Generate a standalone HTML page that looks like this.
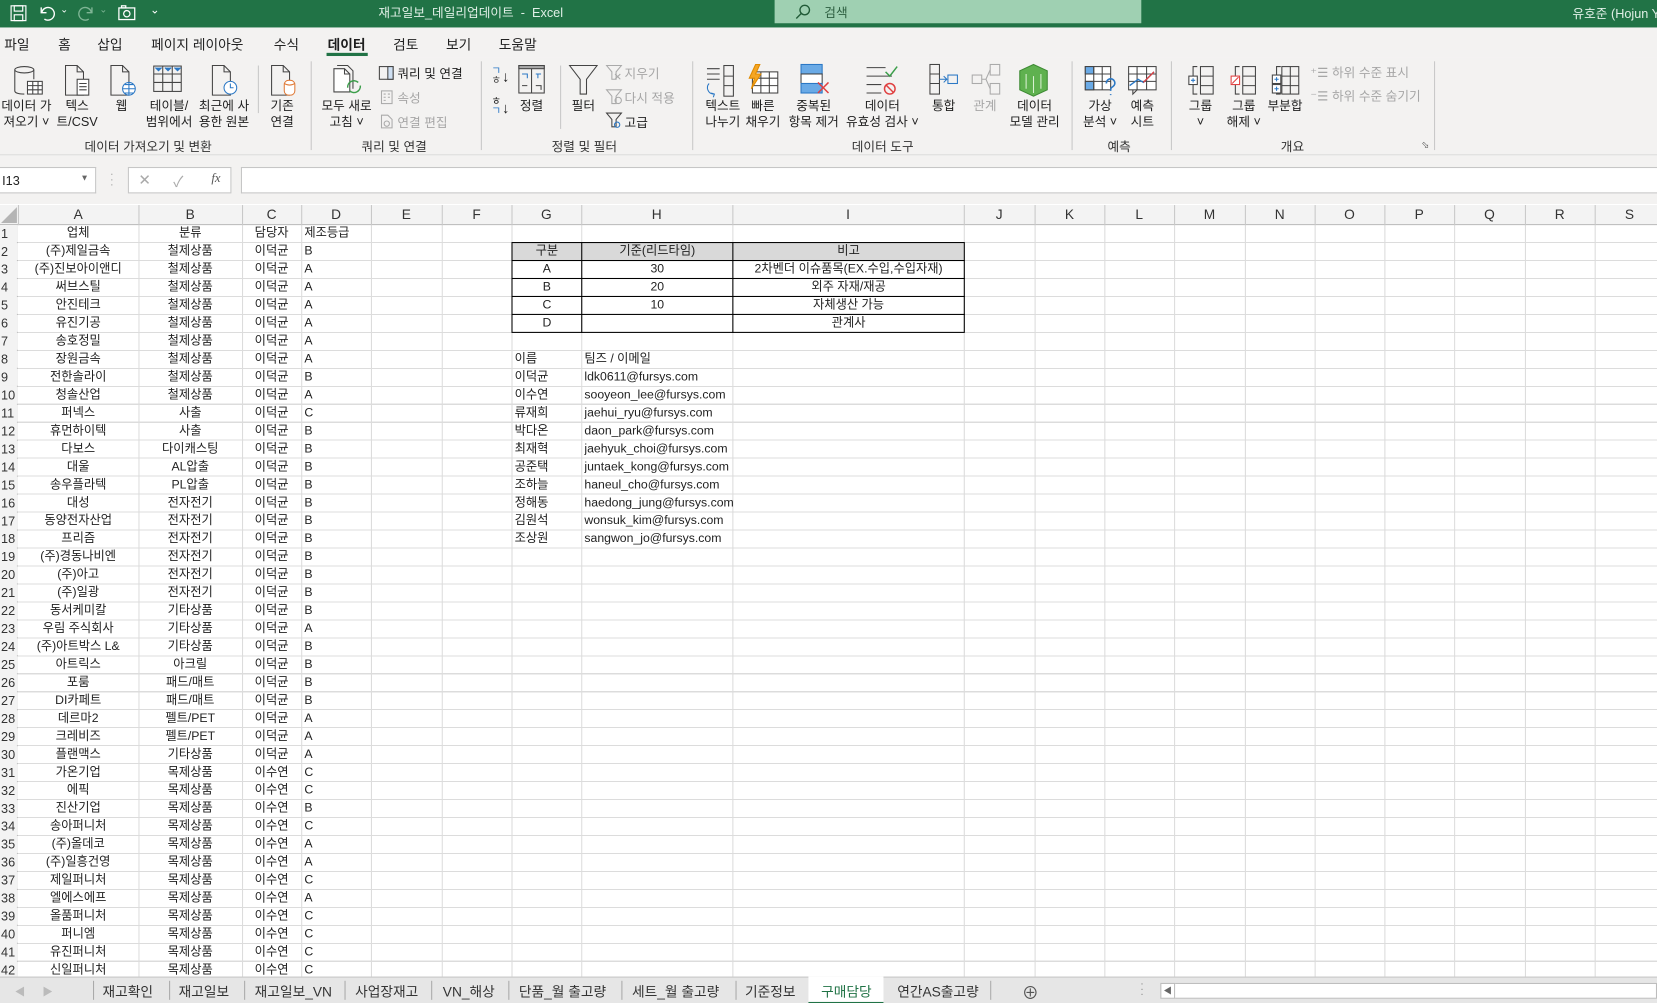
<!DOCTYPE html>
<html><head><meta charset="utf-8">
<style>
*{box-sizing:border-box;margin:0;padding:0}
html,body{width:1657px;height:1003px;overflow:hidden;background:#fff}
#w{position:absolute;left:0;top:0;width:1568px;height:949px;transform:scale(1.05676,1.05690);transform-origin:0 0;font-family:"Liberation Sans","Noto Sans CJK KR",sans-serif;color:#222;overflow:hidden}
.abs{position:absolute}
#title{left:0;top:0;width:1568px;height:26px;background:#217346;color:#fff;white-space:nowrap}
#menu{left:0;top:26px;width:1568px;height:28px;background:#f3f2f1;font-size:13px}
#menu span{position:absolute;top:6px}
#rib{left:0;top:54px;width:1568px;height:93px;background:#f3f2f1;font-size:12px;border-bottom:1px solid #dadada}
#rib .l{position:absolute;text-align:center;line-height:15px;white-space:nowrap}
#rib .s{position:absolute;white-space:nowrap}
#rib .g{position:absolute;top:76px;font-size:12px;color:#333;white-space:nowrap}
#rib .sep{position:absolute;top:4px;width:1px;height:84px;background:#c8c8c8}
#rib svg{position:absolute}
.dis{color:#a6a6a6}
#fb{left:0;top:147px;width:1568px;height:46px;background:#f3f2f1}
#grid{left:0;top:194px;width:1568px;height:730px;background:#fff;font-size:11.6px;overflow:hidden}
#hdr{left:0;top:0;width:1568px;height:19px;background:#f3f3f3;border-bottom:1px solid #bdbdbd;font-size:13px;color:#333}
#hdr span{position:absolute;top:1px;text-align:center}
#rh{left:0;top:19px;width:17px;height:720px;background:#f3f3f3;border-right:1px solid #bdbdbd}
#hl{left:17px;top:19px;width:1560px;height:720px;background:repeating-linear-gradient(to bottom,transparent 0,transparent 16px,#dcdcdc 16px,#dcdcdc 17px)}
.v{position:absolute;top:0;width:1px;height:730px;background:#dcdcdc}
.vh{position:absolute;top:0;width:1px;height:19px;background:#c8c8c8}
.r{position:absolute;left:0;height:17px;width:1568px;line-height:16px;white-space:nowrap}
.r span{position:absolute;top:0;overflow:hidden}
.n{left:1px;width:16px;font-size:12px;color:#333;background:#f3f3f3}
.a{left:17px;width:114px;text-align:center}
.b{left:131px;width:98px;text-align:center}
.c{left:229px;width:56px;text-align:center}
.d{left:288px;width:63px}
.g1{left:487px;width:63px}
.h1{left:553px;width:145px}
.tg{left:484px;width:67px;text-align:center}
.th{left:550px;width:144px;text-align:center}
.ti{left:693px;width:220px;text-align:center}
#tbl{left:484px;top:16px;width:429px;height:86px;border:1px solid #000}
#tabs{left:0;top:924px;width:1568px;height:25px;background:#e6e6e6;border-top:1px solid #c6c6c6;font-size:13px;color:#333}
#tabs span{position:absolute;top:3px}
#tabs i{position:absolute;top:3px;width:1px;height:18px;background:#aaa}
</style></head><body><div id="w">

<div id="title" class="abs">
<svg class="abs" style="left:9px;top:4px" width="17" height="17" viewBox="0 0 17 17" fill="none" stroke="#fff" stroke-width="1.1"><rect x="1.5" y="1.5" width="14" height="14"/><rect x="4.5" y="1.5" width="8" height="5"/><rect x="4.5" y="10" width="8" height="5.5"/></svg>
<svg class="abs" style="left:36px;top:4px" width="18" height="17" viewBox="0 0 18 17" fill="none" stroke="#fff" stroke-width="1.3"><path d="M3 3v5h5"/><path d="M3.5 8A6 6 0 1 1 6 14"/></svg>
<span class="abs" style="left:57px;top:4px;font-size:9px">⌄</span>
<svg class="abs" style="left:72px;top:4px" width="18" height="17" viewBox="0 0 18 17" fill="none" stroke="#7fb595" stroke-width="1.3"><path d="M15 3v5h-5"/><path d="M14.5 8A6 6 0 1 0 12 14"/></svg>
<span class="abs" style="left:94px;top:4px;font-size:9px;color:#7fb595">⌄</span>
<svg class="abs" style="left:111px;top:4px" width="18" height="17" viewBox="0 0 18 17" fill="none" stroke="#fff" stroke-width="1.2"><rect x="1.5" y="3.5" width="15" height="11"/><rect x="4" y="1.5" width="4" height="2"/><circle cx="9" cy="9" r="3"/></svg>
<span class="abs" style="left:142px;top:3px;font-size:11px">⌄</span>
<span class="abs" style="left:358px;top:3px;font-size:12px;color:#e0efe6">재고일보_데일리업데이트 &nbsp;- &nbsp;Excel</span>
<div class="abs" style="left:733px;top:0;width:347px;height:22px;background:#9fd0b2"></div>
<svg class="abs" style="left:752px;top:3px" width="16" height="16" viewBox="0 0 16 16" fill="none" stroke="#215b37" stroke-width="1.3"><circle cx="9.5" cy="6.5" r="4.5"/><path d="M6.3 9.7L1.5 14.5"/></svg>
<span class="abs" style="left:780px;top:3px;font-size:12px;color:#2d5e40">검색</span>
<span class="abs" style="left:1488px;top:4px;font-size:12px;color:#e0efe6">유호준 (Hojun Y</span>
</div>

<div id="menu" class="abs">
<span style="left:4px">파일</span><span style="left:55px">홈</span><span style="left:92px">삽입</span><span style="left:143px">페이지 레이아웃</span><span style="left:259px">수식</span><span style="left:310px;font-weight:bold;color:#1e1e1e">데이터</span><span style="left:372px">검토</span><span style="left:422px">보기</span><span style="left:472px">도움말</span>
<div class="abs" style="left:309px;top:24px;width:39px;height:3px;background:#217346"></div>
</div>

<div id="rib" class="abs">
<svg style="left:11px;top:7px" width="32" height="32" viewBox="0 0 32 32" fill="none" stroke="#444" stroke-width="1"><ellipse cx="12" cy="5" rx="9" ry="3"/><path d="M3 5v20c0 2 4 3 9 3"/><path d="M21 5v9"/><rect x="15" y="16" width="14" height="12" fill="#fff"/><path d="M15 20h14M15 24h14M20 16v12M25 16v12"/></svg>
<div class="l" style="left:0;top:39px;width:50px">데이터 가<br>져오기 ˅</div>
<svg style="left:59px;top:7px" width="30" height="32" viewBox="0 0 30 32" fill="none" stroke="#444"><path d="M3 1h11l6 6v22H3z"/><path d="M14 1v6h6"/><rect x="14" y="14" width="11" height="15" fill="#fff"/><path d="M16 18h7M16 21h7M16 24h7"/></svg>
<div class="l" style="left:48px;top:39px;width:50px">텍스<br>트/CSV</div>
<svg style="left:102px;top:7px" width="30" height="32" viewBox="0 0 30 32" fill="none" stroke="#444"><path d="M3 1h11l6 6v22H3z"/><path d="M14 1v6h6"/><circle cx="20" cy="23" r="6" fill="#fff" stroke="#2b78c5"/><path d="M14 23h12M20 17v12M16 19h8M16 27h8" stroke="#2b78c5"/></svg>
<div class="l" style="left:100px;top:39px;width:30px">웹</div>
<svg style="left:144px;top:7px" width="30" height="30" viewBox="0 0 30 30" fill="none" stroke="#444"><rect x="1.5" y="1.5" width="26" height="24"/><path d="M1.5 9h26M1.5 17h26M10 1.5v24M19 1.5v24"/><path d="M3 3l3 3 3-3M12 3l3 3 3-3M21 3l3 3 3-3" fill="#2b78c5" stroke="#2b78c5"/></svg>
<div class="l" style="left:133px;top:39px;width:54px">테이블/<br>범위에서</div>
<svg style="left:198px;top:7px" width="30" height="32" viewBox="0 0 30 32" fill="none" stroke="#444"><path d="M3 1h11l6 6v22H3z"/><path d="M14 1v6h6"/><circle cx="20" cy="22" r="6" fill="#fff" stroke="#2b78c5"/><path d="M20 18v4h3" stroke="#2b78c5"/></svg>
<div class="l" style="left:185px;top:39px;width:54px">최근에 사<br>용한 원본</div>
<div class="sep" style="left:244px;top:8px;height:45px"></div>
<svg style="left:254px;top:7px" width="30" height="32" viewBox="0 0 30 32" fill="none" stroke="#444"><path d="M3 1h11l6 6v22H3z"/><path d="M14 1v6h6"/><rect x="15" y="15" width="10" height="14" rx="4" fill="#fff" stroke="#e07b39"/><path d="M15 18c3 2 7 2 10 0" stroke="#e07b39"/></svg>
<div class="l" style="left:250px;top:39px;width:34px">기존<br>연결</div>
<div class="g" style="left:80px">데이터 가져오기 및 변환</div>
<div class="sep" style="left:294px"></div>
<svg style="left:314px;top:7px" width="32" height="32" viewBox="0 0 32 32" fill="none" stroke="#444"><path d="M2 4h10l5 5v17H2z" fill="#fff"/><path d="M5 1h10l5 5v17" /><path d="M12 4v5h5"/><path d="M15 22a6 6 0 0 1 10-5M27 20a6 6 0 0 1-10 5" stroke="#3b9e4a" stroke-width="1.4"/></svg>
<div class="l" style="left:300px;top:39px;width:56px">모두 새로<br>고침 ˅</div>
<svg style="left:358px;top:8px" width="15" height="14" viewBox="0 0 15 14" fill="none" stroke="#444"><rect x="1" y="1" width="13" height="12"/><rect x="9" y="1" width="5" height="12" fill="#cfe0f3"/></svg>
<div class="s" style="left:376px;top:7px">쿼리 및 연결</div>
<svg style="left:360px;top:31px" width="12" height="14" viewBox="0 0 12 14" fill="none" stroke="#aaa"><rect x="1" y="1" width="10" height="12"/><path d="M3 4h2M3 7h2M3 10h2M7 4h2M7 7h2"/></svg>
<div class="s dis" style="left:376px;top:30px">속성</div>
<svg style="left:360px;top:54px" width="12" height="14" viewBox="0 0 12 14" fill="none" stroke="#aaa"><path d="M1 1h6l4 4v8H1z"/><circle cx="6" cy="9" r="2.5"/></svg>
<div class="s dis" style="left:376px;top:53px">연결 편집</div>
<div class="g" style="left:342px">쿼리 및 연결</div>
<div class="sep" style="left:455px"></div>
<div class="s" style="left:465px;top:9px;font-size:10px;line-height:9px;color:#2b78c5">ㄱ<br><span style="position:static;color:#444">ㅎ</span></div><div class="s" style="left:475px;top:10px;font-size:14px">↓</div>
<div class="s" style="left:465px;top:38px;font-size:10px;line-height:9px">ㅎ<br><span style="position:static;color:#2b78c5">ㄱ</span></div><div class="s" style="left:475px;top:40px;font-size:14px">↓</div>
<svg style="left:490px;top:7px" width="26" height="28" viewBox="0 0 26 28" fill="none" stroke="#444"><rect x="1" y="1" width="24" height="26"/><rect x="1" y="1" width="24" height="3" fill="#aaa"/><path d="M13 4v23"/><path d="M4 9h5v4M17 9h5M19 9v4" stroke="#2b78c5"/><path d="M4 20h5M17 20h5v4" /></svg>
<div class="l" style="left:486px;top:39px;width:34px">정렬</div>
<div class="sep" style="left:530px;top:8px;height:60px"></div>
<svg style="left:538px;top:7px" width="28" height="30" viewBox="0 0 28 30" fill="none" stroke="#444"><path d="M1 1h26l-10 13v14h-6V14z"/></svg>
<div class="l" style="left:535px;top:39px;width:34px">필터</div>
<svg style="left:573px;top:7px" width="16" height="16" viewBox="0 0 16 16" fill="none" stroke="#aaa"><path d="M1 1h14l-5 6v7H6V7z"/><path d="M9 9l5 5M14 9l-5 5"/></svg>
<div class="s dis" style="left:591px;top:7px">지우기</div>
<svg style="left:573px;top:30px" width="16" height="16" viewBox="0 0 16 16" fill="none" stroke="#aaa"><path d="M1 1h14l-5 6v7H6V7z"/><circle cx="12" cy="11" r="3"/></svg>
<div class="s dis" style="left:591px;top:30px">다시 적용</div>
<svg style="left:573px;top:52px" width="16" height="16" viewBox="0 0 16 16" fill="none" stroke="#444"><path d="M1 1h14l-5 6v7H6V7z"/><circle cx="11" cy="12" r="2.5" stroke="#2b78c5"/></svg>
<div class="s" style="left:591px;top:53px">고급</div>
<div class="g" style="left:522px">정렬 및 필터</div>
<div class="sep" style="left:655px"></div>
<svg style="left:667px;top:7px" width="30" height="32" viewBox="0 0 30 32" fill="none" stroke="#444"><path d="M2 4h12M2 9h12M2 14h12"/><rect x="18" y="1" width="9" height="29"/><path d="M18 11h9M18 20h9"/><path d="M8 28a6 6 0 0 1-4-10" stroke="#2b78c5"/><path d="M6 27l3 1-1 3" stroke="#2b78c5"/></svg>
<div class="l" style="left:662px;top:39px;width:44px">텍스트<br>나누기</div>
<svg style="left:706px;top:6px" width="32" height="32" viewBox="0 0 32 32" fill="none" stroke="#444"><rect x="6" y="8" width="24" height="20" fill="#fff"/><path d="M6 14h24M6 21h24M14 8v20M22 8v20"/><path d="M9 1L3 14h5l-3 10 9-14H9l4-9z" fill="#f5a623" stroke="#e08a00"/></svg>
<div class="l" style="left:700px;top:39px;width:44px">빠른<br>채우기</div>
<svg style="left:756px;top:6px" width="30" height="32" viewBox="0 0 30 32" fill="none" stroke="#444"><rect x="2" y="1" width="20" height="9" fill="#6aaae6" stroke="#2b78c5"/><rect x="2" y="10" width="20" height="9" fill="#fff"/><rect x="2" y="19" width="20" height="9" fill="#6aaae6" stroke="#2b78c5"/><path d="M18 18l10 10M28 18L18 28" stroke="#e04040" stroke-width="1.4"/></svg>
<div class="l" style="left:740px;top:39px;width:60px">중복된<br>항목 제거</div>
<svg style="left:818px;top:7px" width="32" height="30" viewBox="0 0 32 30" fill="none" stroke="#444"><path d="M2 3h18M2 11h24M2 19h14M2 27h14"/><path d="M20 7l4 4 7-9" stroke="#3b9e4a" stroke-width="1.4"/><circle cx="24" cy="23" r="5" stroke="#e04040" stroke-width="1.4"/><path d="M20.5 19.5l7 7" stroke="#e04040" stroke-width="1.4"/></svg>
<div class="l" style="left:799px;top:39px;width:72px">데이터<br>유효성 검사 ˅</div>
<svg style="left:878px;top:6px" width="30" height="32" viewBox="0 0 30 32" fill="none" stroke="#444"><rect x="2" y="1" width="9" height="28"/><path d="M2 10h9M2 19h9"/><path d="M11 15h7M15 12l3 3-3 3" stroke="#2b78c5"/><rect x="19" y="11" width="9" height="8" stroke="#2b78c5"/></svg>
<div class="l" style="left:876px;top:39px;width:34px">통합</div>
<svg style="left:918px;top:6px" width="30" height="32" viewBox="0 0 30 32" fill="none" stroke="#aaa"><rect x="2" y="11" width="9" height="8"/><rect x="19" y="1" width="9" height="10"/><rect x="19" y="19" width="9" height="10"/><path d="M11 15h4l4-9M15 15l4 9"/></svg>
<div class="l dis" style="left:915px;top:39px;width:34px">관계</div>
<svg style="left:963px;top:6px" width="30" height="32" viewBox="0 0 30 32" fill="#5fb14f" stroke="#3d8a33"><path d="M15 1l13 6v18l-13 6-13-6V7z"/><path d="M8 10v14M15 12v16M22 10v14" stroke="#d9f0d2" fill="none"/></svg>
<div class="l" style="left:950px;top:39px;width:58px">데이터<br>모델 관리</div>
<div class="g" style="left:806px">데이터 도구</div>
<div class="sep" style="left:1014px"></div>
<svg style="left:1025px;top:7px" width="32" height="30" viewBox="0 0 32 30" fill="none" stroke="#444"><rect x="2" y="2" width="24" height="22" fill="#fff"/><rect x="2" y="2" width="8" height="7" fill="#6aaae6"/><rect x="2" y="16" width="8" height="8" fill="#6aaae6"/><path d="M2 9h24M2 16h24M10 2v22M18 2v22"/><path d="M22 18a4 4 0 1 1 6 3c-2 1-2 2-2 4M26 28v1" stroke="#2b78c5" stroke-width="1.5"/></svg>
<div class="l" style="left:1021px;top:39px;width:40px">가상<br>분석 ˅</div>
<svg style="left:1066px;top:7px" width="30" height="30" viewBox="0 0 30 30" fill="none" stroke="#444"><rect x="2" y="2" width="26" height="22" fill="#fff"/><path d="M2 9h26M2 16h26M10 2v22M19 2v22"/><path d="M3 20l8-6 5 3 10-10" stroke="#2b78c5" stroke-width="1.3"/><path d="M16 17l10-10" stroke="#e04040" stroke-width="1.3"/><path d="M6 24v4l4-4"/></svg>
<div class="l" style="left:1064px;top:39px;width:34px">예측<br>시트</div>
<div class="g" style="left:1048px">예측</div>
<div class="sep" style="left:1108px"></div>
<svg style="left:1124px;top:7px" width="26" height="30" viewBox="0 0 26 30" fill="none" stroke="#444"><path d="M9 2H5v26h4"/><rect x="12" y="2" width="12" height="26"/><path d="M12 11h12M12 20h12"/><rect x="1" y="11" width="8" height="8" fill="#fff"/><path d="M3 15h4M5 13v4" stroke="#2b78c5"/></svg>
<div class="l" style="left:1119px;top:39px;width:34px">그룹<br>˅</div>
<svg style="left:1164px;top:7px" width="26" height="30" viewBox="0 0 26 30" fill="none" stroke="#444"><path d="M9 2H5v26h4"/><rect x="12" y="2" width="12" height="26"/><path d="M12 11h12M12 20h12"/><rect x="1" y="11" width="8" height="8" fill="#fff" stroke="#e04040"/><path d="M2 18l6-6" stroke="#e04040"/></svg>
<div class="l" style="left:1157px;top:39px;width:40px">그룹<br>해제 ˅</div>
<svg style="left:1203px;top:7px" width="28" height="30" viewBox="0 0 28 30" fill="none" stroke="#444"><path d="M9 2H5v26h4"/><rect x="10" y="2" width="16" height="26"/><path d="M10 11h16M10 20h16M18 2v26"/><rect x="1" y="10" width="8" height="8" fill="#fff"/><path d="M3 14h4M5 12v4" stroke="#2b78c5"/><rect x="1" y="19" width="8" height="8" fill="#fff"/><path d="M3 23h4M5 21v4" stroke="#2b78c5"/></svg>
<div class="l" style="left:1196px;top:39px;width:40px">부분합</div>
<div class="s dis" style="left:1240px;top:6px">⁺☰ 하위 수준 표시</div>
<div class="s dis" style="left:1240px;top:28px">⁻☰ 하위 수준 숨기기</div>
<div class="g" style="left:1212px">개요</div>
<div class="s" style="left:1345px;top:78px;font-size:9px;color:#555">⬂</div>
<div class="sep" style="left:1357px"></div>
</div>

<div id="fb" class="abs">
<div class="abs" style="left:0;top:11px;width:91px;height:25px;background:#fff;border:1px solid #c6c6c6;border-left:0;font-size:12px;padding:5px 0 0 2px">I13</div>
<div class="abs" style="left:76px;top:17px;font-size:8px;color:#666">▼</div>
<div class="abs" style="left:104px;top:16px;font-size:11px;color:#aaa;line-height:5px">·<br>·<br>·</div>
<div class="abs" style="left:121px;top:11px;width:98px;height:25px;background:#fff;border:1px solid #c6c6c6"></div>
<div class="abs" style="left:131px;top:15px;font-size:14px;color:#aaa">✕</div>
<div class="abs" style="left:164px;top:15px;font-size:14px;color:#aaa">✓</div>
<div class="abs" style="left:200px;top:14px;font-size:12px;font-style:italic;font-family:'Liberation Serif',serif;color:#555">fx</div>
<div class="abs" style="left:228px;top:11px;width:1340px;height:25px;background:#fff;border:1px solid #c6c6c6;border-right:0"></div>
</div>

<div id="grid" class="abs">
<div id="hl" class="abs"></div>
<div class="v" style="left:131px"></div><div class="v" style="left:229px"></div><div class="v" style="left:285px"></div><div class="v" style="left:351px"></div><div class="v" style="left:418px"></div><div class="v" style="left:484px"></div><div class="v" style="left:550px"></div><div class="v" style="left:693px"></div><div class="v" style="left:912px"></div><div class="v" style="left:979px"></div><div class="v" style="left:1045px"></div><div class="v" style="left:1111px"></div><div class="v" style="left:1178px"></div><div class="v" style="left:1244px"></div><div class="v" style="left:1310px"></div><div class="v" style="left:1376px"></div><div class="v" style="left:1443px"></div><div class="v" style="left:1509px"></div>
<div id="hdr" class="abs">
<div class="abs" style="width:0;height:0;border-left:15px solid transparent;border-bottom:15px solid #b5b5b5;left:1px;top:2px"></div>
<span style="left:17px;width:114px">A</span><span style="left:131px;width:98px">B</span><span style="left:229px;width:56px">C</span><span style="left:285px;width:66px">D</span><span style="left:351px;width:67px">E</span><span style="left:418px;width:66px">F</span><span style="left:484px;width:66px">G</span><span style="left:550px;width:143px">H</span><span style="left:693px;width:219px">I</span><span style="left:912px;width:67px">J</span><span style="left:979px;width:66px">K</span><span style="left:1045px;width:66px">L</span><span style="left:1111px;width:67px">M</span><span style="left:1178px;width:66px">N</span><span style="left:1244px;width:66px">O</span><span style="left:1310px;width:66px">P</span><span style="left:1376px;width:67px">Q</span><span style="left:1443px;width:66px">R</span><span style="left:1509px;width:66px">S</span>
<div class="vh" style="left:17px"></div><div class="vh" style="left:131px"></div><div class="vh" style="left:229px"></div><div class="vh" style="left:285px"></div><div class="vh" style="left:351px"></div><div class="vh" style="left:418px"></div><div class="vh" style="left:484px"></div><div class="vh" style="left:550px"></div><div class="vh" style="left:693px"></div><div class="vh" style="left:912px"></div><div class="vh" style="left:979px"></div><div class="vh" style="left:1045px"></div><div class="vh" style="left:1111px"></div><div class="vh" style="left:1178px"></div><div class="vh" style="left:1244px"></div><div class="vh" style="left:1310px"></div><div class="vh" style="left:1376px"></div><div class="vh" style="left:1443px"></div><div class="vh" style="left:1509px"></div>
</div>
<div id="rh" class="abs"></div>

<div class="abs" style="left:0;top:19px;width:1568px;height:720px">
<div class="abs" style="left:485px;top:17px;width:427px;height:16px;background:#d9d9d9"></div>
<div id="tbl" class="abs"></div>
<div class="abs" style="left:484px;top:33px;width:429px;height:1px;background:#000"></div>
<div class="abs" style="left:484px;top:50px;width:429px;height:1px;background:#000"></div>
<div class="abs" style="left:484px;top:67px;width:429px;height:1px;background:#000"></div>
<div class="abs" style="left:484px;top:84px;width:429px;height:1px;background:#000"></div>
<div class="abs" style="left:550px;top:16px;width:1px;height:86px;background:#000"></div>
<div class="abs" style="left:693px;top:16px;width:1px;height:86px;background:#000"></div>

<div class="r" style="top:0"><span class="n">1</span><span class="a">업체</span><span class="b">분류</span><span class="c">담당자</span><span class="d">제조등급</span></div>
<div class="r" style="top:17px"><span class="n">2</span><span class="a">(주)제일금속</span><span class="b">철제상품</span><span class="c">이덕균</span><span class="d">B</span><span class="tg">구분</span><span class="th">기준(리드타임)</span><span class="ti">비고</span></div>
<div class="r" style="top:34px"><span class="n">3</span><span class="a">(주)진보아이앤디</span><span class="b">철제상품</span><span class="c">이덕균</span><span class="d">A</span><span class="tg">A</span><span class="th">30</span><span class="ti">2차벤더 이슈품목(EX.수입,수입자재)</span></div>
<div class="r" style="top:51px"><span class="n">4</span><span class="a">써브스틸</span><span class="b">철제상품</span><span class="c">이덕균</span><span class="d">A</span><span class="tg">B</span><span class="th">20</span><span class="ti">외주 자재/재공</span></div>
<div class="r" style="top:68px"><span class="n">5</span><span class="a">안진테크</span><span class="b">철제상품</span><span class="c">이덕균</span><span class="d">A</span><span class="tg">C</span><span class="th">10</span><span class="ti">자체생산 가능</span></div>
<div class="r" style="top:85px"><span class="n">6</span><span class="a">유진기공</span><span class="b">철제상품</span><span class="c">이덕균</span><span class="d">A</span><span class="tg">D</span><span class="ti">관계사</span></div>
<div class="r" style="top:102px"><span class="n">7</span><span class="a">송호정밀</span><span class="b">철제상품</span><span class="c">이덕균</span><span class="d">A</span></div>
<div class="r" style="top:119px"><span class="n">8</span><span class="a">장원금속</span><span class="b">철제상품</span><span class="c">이덕균</span><span class="d">A</span><span class="g1">이름</span><span class="h1">팀즈 / 이메일</span></div>
<div class="r" style="top:136px"><span class="n">9</span><span class="a">전한솔라이</span><span class="b">철제상품</span><span class="c">이덕균</span><span class="d">B</span><span class="g1">이덕균</span><span class="h1">ldk0611@fursys.com</span></div>
<div class="r" style="top:153px"><span class="n">10</span><span class="a">청솔산업</span><span class="b">철제상품</span><span class="c">이덕균</span><span class="d">A</span><span class="g1">이수연</span><span class="h1">sooyeon_lee@fursys.com</span></div>
<div class="r" style="top:170px"><span class="n">11</span><span class="a">퍼넥스</span><span class="b">사출</span><span class="c">이덕균</span><span class="d">C</span><span class="g1">류재희</span><span class="h1">jaehui_ryu@fursys.com</span></div>
<div class="r" style="top:187px"><span class="n">12</span><span class="a">휴먼하이텍</span><span class="b">사출</span><span class="c">이덕균</span><span class="d">B</span><span class="g1">박다온</span><span class="h1">daon_park@fursys.com</span></div>
<div class="r" style="top:204px"><span class="n">13</span><span class="a">다보스</span><span class="b">다이캐스팅</span><span class="c">이덕균</span><span class="d">B</span><span class="g1">최재혁</span><span class="h1">jaehyuk_choi@fursys.com</span></div>
<div class="r" style="top:221px"><span class="n">14</span><span class="a">대울</span><span class="b">AL압출</span><span class="c">이덕균</span><span class="d">B</span><span class="g1">공준택</span><span class="h1">juntaek_kong@fursys.com</span></div>
<div class="r" style="top:238px"><span class="n">15</span><span class="a">송우플라텍</span><span class="b">PL압출</span><span class="c">이덕균</span><span class="d">B</span><span class="g1">조하늘</span><span class="h1">haneul_cho@fursys.com</span></div>
<div class="r" style="top:255px"><span class="n">16</span><span class="a">대성</span><span class="b">전자전기</span><span class="c">이덕균</span><span class="d">B</span><span class="g1">정해동</span><span class="h1">haedong_jung@fursys.com</span></div>
<div class="r" style="top:272px"><span class="n">17</span><span class="a">동양전자산업</span><span class="b">전자전기</span><span class="c">이덕균</span><span class="d">B</span><span class="g1">김원석</span><span class="h1">wonsuk_kim@fursys.com</span></div>
<div class="r" style="top:289px"><span class="n">18</span><span class="a">프리즘</span><span class="b">전자전기</span><span class="c">이덕균</span><span class="d">B</span><span class="g1">조상원</span><span class="h1">sangwon_jo@fursys.com</span></div>
<div class="r" style="top:306px"><span class="n">19</span><span class="a">(주)경동나비엔</span><span class="b">전자전기</span><span class="c">이덕균</span><span class="d">B</span></div>
<div class="r" style="top:323px"><span class="n">20</span><span class="a">(주)아고</span><span class="b">전자전기</span><span class="c">이덕균</span><span class="d">B</span></div>
<div class="r" style="top:340px"><span class="n">21</span><span class="a">(주)일광</span><span class="b">전자전기</span><span class="c">이덕균</span><span class="d">B</span></div>
<div class="r" style="top:357px"><span class="n">22</span><span class="a">동서케미칼</span><span class="b">기타상품</span><span class="c">이덕균</span><span class="d">B</span></div>
<div class="r" style="top:374px"><span class="n">23</span><span class="a">우림 주식회사</span><span class="b">기타상품</span><span class="c">이덕균</span><span class="d">A</span></div>
<div class="r" style="top:391px"><span class="n">24</span><span class="a">(주)아트박스 L&amp;</span><span class="b">기타상품</span><span class="c">이덕균</span><span class="d">B</span></div>
<div class="r" style="top:408px"><span class="n">25</span><span class="a">아트릭스</span><span class="b">아크릴</span><span class="c">이덕균</span><span class="d">B</span></div>
<div class="r" style="top:425px"><span class="n">26</span><span class="a">포룸</span><span class="b">패드/매트</span><span class="c">이덕균</span><span class="d">B</span></div>
<div class="r" style="top:442px"><span class="n">27</span><span class="a">DI카페트</span><span class="b">패드/매트</span><span class="c">이덕균</span><span class="d">B</span></div>
<div class="r" style="top:459px"><span class="n">28</span><span class="a">데르마2</span><span class="b">펠트/PET</span><span class="c">이덕균</span><span class="d">A</span></div>
<div class="r" style="top:476px"><span class="n">29</span><span class="a">크레비즈</span><span class="b">펠트/PET</span><span class="c">이덕균</span><span class="d">A</span></div>
<div class="r" style="top:493px"><span class="n">30</span><span class="a">플랜맥스</span><span class="b">기타상품</span><span class="c">이덕균</span><span class="d">A</span></div>
<div class="r" style="top:510px"><span class="n">31</span><span class="a">가온기업</span><span class="b">목제상품</span><span class="c">이수연</span><span class="d">C</span></div>
<div class="r" style="top:527px"><span class="n">32</span><span class="a">에픽</span><span class="b">목제상품</span><span class="c">이수연</span><span class="d">C</span></div>
<div class="r" style="top:544px"><span class="n">33</span><span class="a">진산기업</span><span class="b">목제상품</span><span class="c">이수연</span><span class="d">B</span></div>
<div class="r" style="top:561px"><span class="n">34</span><span class="a">송아퍼니처</span><span class="b">목제상품</span><span class="c">이수연</span><span class="d">C</span></div>
<div class="r" style="top:578px"><span class="n">35</span><span class="a">(주)올데코</span><span class="b">목제상품</span><span class="c">이수연</span><span class="d">A</span></div>
<div class="r" style="top:595px"><span class="n">36</span><span class="a">(주)일흥건영</span><span class="b">목제상품</span><span class="c">이수연</span><span class="d">A</span></div>
<div class="r" style="top:612px"><span class="n">37</span><span class="a">제일퍼니처</span><span class="b">목제상품</span><span class="c">이수연</span><span class="d">C</span></div>
<div class="r" style="top:629px"><span class="n">38</span><span class="a">엘에스에프</span><span class="b">목제상품</span><span class="c">이수연</span><span class="d">A</span></div>
<div class="r" style="top:646px"><span class="n">39</span><span class="a">올품퍼니처</span><span class="b">목제상품</span><span class="c">이수연</span><span class="d">C</span></div>
<div class="r" style="top:663px"><span class="n">40</span><span class="a">퍼니엠</span><span class="b">목제상품</span><span class="c">이수연</span><span class="d">C</span></div>
<div class="r" style="top:680px"><span class="n">41</span><span class="a">유진퍼니처</span><span class="b">목제상품</span><span class="c">이수연</span><span class="d">C</span></div>
<div class="r" style="top:697px"><span class="n">42</span><span class="a">신일퍼니처</span><span class="b">목제상품</span><span class="c">이수연</span><span class="d">C</span></div>
</div>
</div>

<div id="tabs" class="abs">
<span style="left:14px;color:#bbb;font-size:10px;top:5px">◀</span><span style="left:40px;color:#bbb;font-size:10px;top:5px">▶</span>
<i style="left:88px"></i><span style="left:97px">재고확인</span>
<i style="left:160px"></i><span style="left:169px">재고일보</span>
<i style="left:231px"></i><span style="left:241px">재고일보_VN</span>
<i style="left:326px"></i><span style="left:336px">사업장재고</span>
<i style="left:408px"></i><span style="left:419px">VN_해상</span>
<i style="left:481px"></i><span style="left:491px">단품_월 출고량</span>
<i style="left:588px"></i><span style="left:598px">세트_월 출고량</span>
<i style="left:696px"></i><span style="left:705px">기준정보</span>
<div class="abs" style="left:765px;top:-1px;width:71px;height:26px;background:#fff;border-bottom:2px solid #217346"></div>
<span style="left:777px;color:#217346">구매담당</span>
<span style="left:849px">연간AS출고량</span>
<i style="left:937px"></i>
<span style="left:967px;font-size:16px;top:1px;color:#555">⊕</span>
<span style="left:1079px;color:#888;font-size:10px;top:4px;line-height:5px">·<br>·<br>·</span>
<div class="abs" style="left:1098px;top:5px;width:470px;height:15px;background:#fff;border:1px solid #bdbdbd"></div>
<div class="abs" style="left:1098px;top:5px;width:14px;height:15px;border:1px solid #bdbdbd;font-size:8px;color:#666;text-align:center;line-height:13px;background:#fff">◀</div>
</div>
</div></body></html>
